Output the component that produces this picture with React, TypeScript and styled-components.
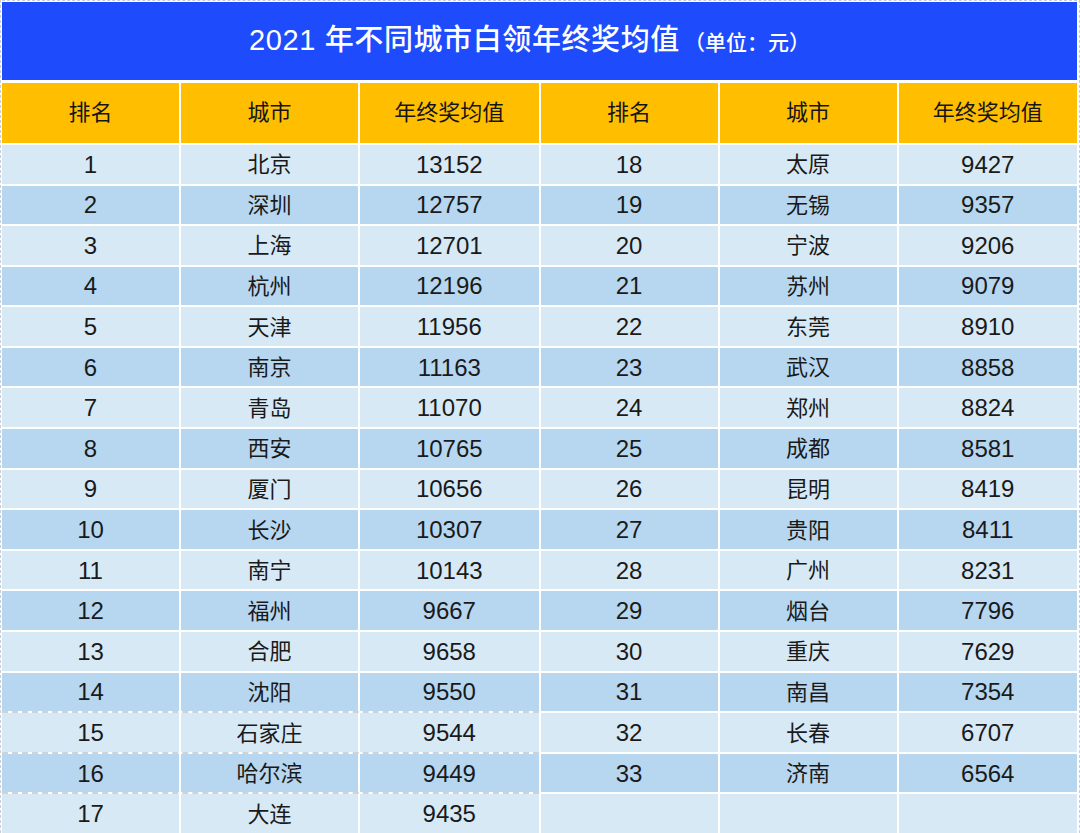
import React from 'react';
import styled, {createGlobalStyle} from 'styled-components';

type Row = {rank: number; city: string; value: number};

const LEFT: Row[] = [
  {rank: 1, city: '北京', value: 13152},
  {rank: 2, city: '深圳', value: 12757},
  {rank: 3, city: '上海', value: 12701},
  {rank: 4, city: '杭州', value: 12196},
  {rank: 5, city: '天津', value: 11956},
  {rank: 6, city: '南京', value: 11163},
  {rank: 7, city: '青岛', value: 11070},
  {rank: 8, city: '西安', value: 10765},
  {rank: 9, city: '厦门', value: 10656},
  {rank: 10, city: '长沙', value: 10307},
  {rank: 11, city: '南宁', value: 10143},
  {rank: 12, city: '福州', value: 9667},
  {rank: 13, city: '合肥', value: 9658},
  {rank: 14, city: '沈阳', value: 9550},
  {rank: 15, city: '石家庄', value: 9544},
  {rank: 16, city: '哈尔滨', value: 9449},
  {rank: 17, city: '大连', value: 9435},
];

const RIGHT: Row[] = [
  {rank: 18, city: '太原', value: 9427},
  {rank: 19, city: '无锡', value: 9357},
  {rank: 20, city: '宁波', value: 9206},
  {rank: 21, city: '苏州', value: 9079},
  {rank: 22, city: '东莞', value: 8910},
  {rank: 23, city: '武汉', value: 8858},
  {rank: 24, city: '郑州', value: 8824},
  {rank: 25, city: '成都', value: 8581},
  {rank: 26, city: '昆明', value: 8419},
  {rank: 27, city: '贵阳', value: 8411},
  {rank: 28, city: '广州', value: 8231},
  {rank: 29, city: '烟台', value: 7796},
  {rank: 30, city: '重庆', value: 7629},
  {rank: 31, city: '南昌', value: 7354},
  {rank: 32, city: '长春', value: 6707},
  {rank: 33, city: '济南', value: 6564},
];

const CJK = `"Noto Sans CJK SC", "Liberation Sans", sans-serif`;

const GlobalStyle = createGlobalStyle`
  * { box-sizing: border-box; }
  html, body {
    margin: 0;
    padding: 0;
    background: #ffffff;
  }
  body {
    font-family: "Liberation Sans", "Noto Sans CJK SC", sans-serif;
    color: #1a1a1a;
  }
`;

const Page = styled.div`
  width: 1080px;
  height: 833px;
  overflow: hidden;
  display: flex;
  flex-direction: column;
  gap: 3px;
  border-left: 1px dashed #c9cdd6;
  border-right: 1px dashed #c9cdd6;
  padding: 0 2px 0 1px;
`;

const TitleBar = styled.div`
  height: 80px;
  border-top: 1px dashed #c9cdd6;
  padding-top: 1px;
  background-clip: content-box;
  background-color: #1e4bfc;
  display: flex;
  align-items: center;
  justify-content: center;
  color: #ffffff;
`;

const TitleText = styled.div`
  display: flex;
  align-items: baseline;
  margin-right: 20px;
  font-size: 29px;
  font-weight: 500;
  letter-spacing: 0.6px;
  line-height: 1;
`;

const Unit = styled.span`
  font-family: ${CJK};
  font-size: 21px;
  font-weight: 500;
  letter-spacing: 0;
  margin-left: 4px;
`;

const Tables = styled.div`
  display: grid;
  grid-template-columns: 1fr 1fr;
  gap: 2px;
`;

const Table = styled.div`
  display: flex;
  flex-direction: column;
  gap: 2px;
`;

const RowLine = styled.div<{$dashed?: boolean}>`
  display: grid;
  grid-template-columns: 177px 177px 1fr;
  gap: 2px;
  ${p =>
    p.$dashed &&
    `
    margin-top: -2px;
    border-top: 2px dashed #cfd3d8;
  `}
`;

const HeadCell = styled.div`
  height: 60px;
  background: #ffbf00;
  display: flex;
  align-items: center;
  justify-content: center;
  font-family: ${CJK};
  font-size: 22px;
  line-height: 1;
  color: #151515;
  padding-bottom: 5px;
`;

const Cell = styled.div<{$dark: boolean; $num?: boolean}>`
  height: 38.6px;
  background: ${p => (p.$dark ? '#b7d7f0' : '#d8e9f6')};
  display: flex;
  align-items: center;
  justify-content: center;
  line-height: 1;
  font-family: ${p => (p.$num ? `"Liberation Sans", sans-serif` : CJK)};
  font-size: ${p => (p.$num ? '24px' : '22px')};
  color: #1a1a1a;
  padding-top: ${p => (p.$num ? '1px' : '0')};
  padding-bottom: ${p => (p.$num ? '0' : '4px')};
`;

const Header = () => (
  <RowLine>
    <HeadCell>排名</HeadCell>
    <HeadCell>城市</HeadCell>
    <HeadCell>年终奖均值</HeadCell>
  </RowLine>
);

const RankTable = ({rows, fill, dashedFrom}: {rows: Row[]; fill: number; dashedFrom?: number}) => {
  const empty = Array.from({length: fill - rows.length}, (_, i) => rows.length + i);
  return (
    <Table>
      <Header />
      {rows.map((r, i) => (
        <RowLine key={r.rank} $dashed={dashedFrom !== undefined && r.rank >= dashedFrom}>
          <Cell $dark={i % 2 === 1} $num>
            {r.rank}
          </Cell>
          <Cell $dark={i % 2 === 1}>{r.city}</Cell>
          <Cell $dark={i % 2 === 1} $num>
            {r.value}
          </Cell>
        </RowLine>
      ))}
      {empty.map(i => (
        <RowLine key={`e${i}`}>
          <Cell $dark={i % 2 === 1} />
          <Cell $dark={i % 2 === 1} />
          <Cell $dark={i % 2 === 1} />
        </RowLine>
      ))}
    </Table>
  );
};

export default function App() {
  return (
    <>
      <GlobalStyle />
      <Page>
        <TitleBar>
          <TitleText>
            2021 年不同城市白领年终奖均值<Unit>（单位：元）</Unit>
          </TitleText>
        </TitleBar>
        <Tables>
          <RankTable rows={LEFT} fill={17} dashedFrom={15} />
          <RankTable rows={RIGHT} fill={17} />
        </Tables>
      </Page>
    </>
  );
}
